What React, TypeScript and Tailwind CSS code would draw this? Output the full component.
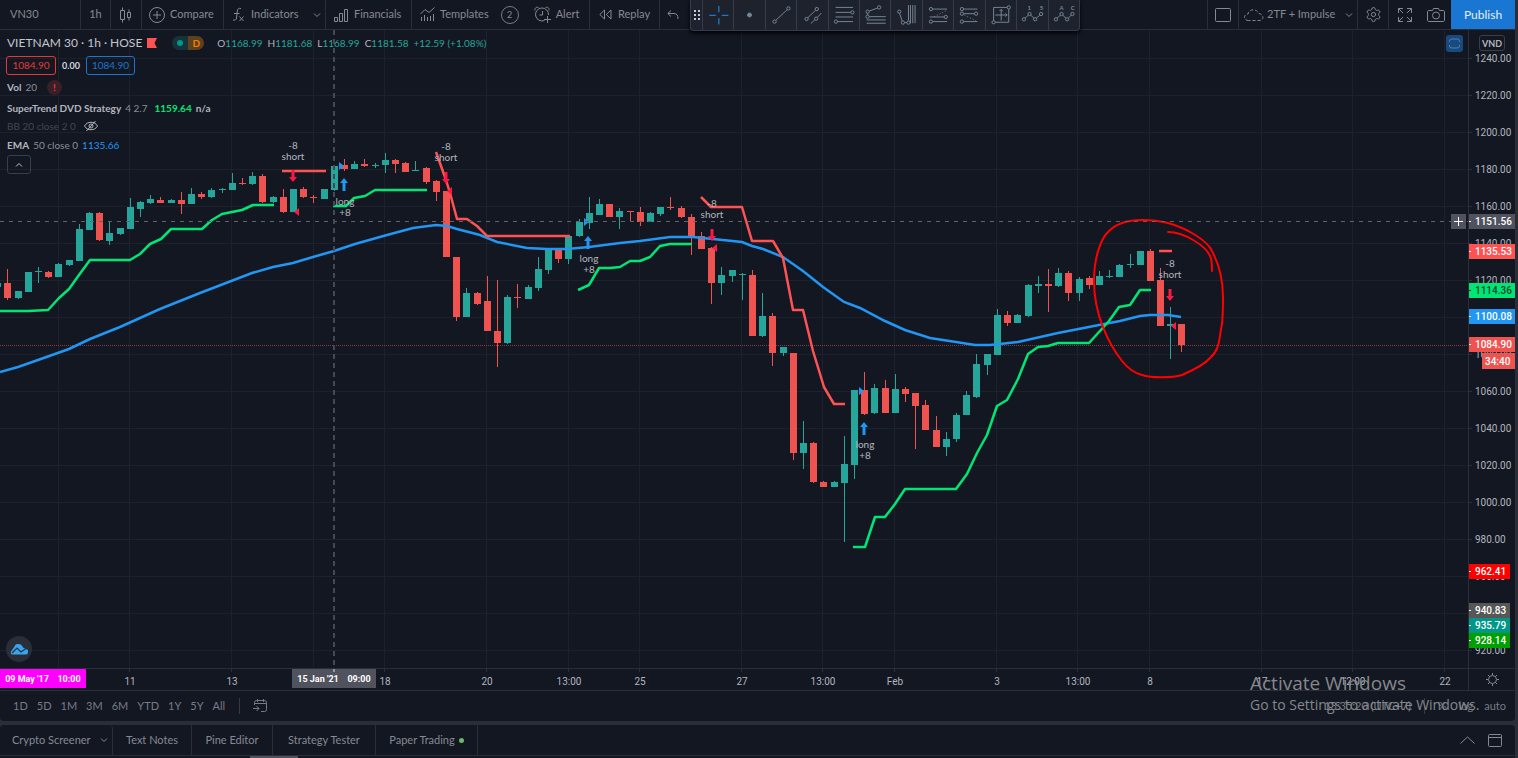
import type { ReactNode } from "react";
import { Settings } from "lucide-react";

const BAR_STEP = 10.202;
const FIRST_BAR = 7.3;
const PLOT_TOP = 30;

const UP = "#26a69a";
const DOWN = "#ef5350";

// [direction, body top, body bottom, high, low], starting one bar off screen
const candles: [string, number, number, number, number][] = [
  ["u", 283, 287, 283, 287],
  ["d", 283, 298, 269, 300],
  ["u", 291, 298, 291, 299],
  ["u", 272, 292, 272, 292],
  ["u", 271, 272, 267, 283],
  ["d", 272, 277, 271, 278],
  ["u", 264, 277, 263, 277],
  ["u", 260, 265, 260, 266],
  ["u", 229, 261, 224, 261],
  ["u", 213, 230, 212, 230],
  ["d", 213, 240, 212, 241],
  ["u", 233, 241, 221, 245],
  ["u", 228, 234, 228, 235],
  ["u", 207, 229, 198, 229],
  ["u", 202, 209, 201, 217],
  ["u", 199, 203, 195, 204],
  ["d", 200, 203, 197, 203],
  ["u", 200, 203, 199, 203],
  ["d", 200, 204, 192, 214],
  ["u", 194, 204, 188, 204],
  ["d", 194, 197, 192, 199],
  ["u", 190, 197, 188, 198],
  ["u", 189, 190, 188, 193],
  ["u", 183, 190, 173, 190],
  ["d", 183, 184, 178, 185],
  ["u", 176, 184, 172, 185],
  ["d", 176, 202, 174, 203],
  ["u", 197, 202, 196, 203],
  ["d", 197, 212, 189, 213],
  ["u", 189, 212, 189, 212],
  ["d", 189, 197, 187, 198],
  ["d", 197, 198, 195, 203],
  ["u", 189, 199, 189, 199],
  ["u", 166, 190, 166, 191],
  ["d", 165, 169, 159, 171],
  ["u", 164, 169, 161, 169],
  ["d", 164, 166, 159, 167],
  ["u", 165, 166, 163, 168],
  ["u", 160, 165, 153, 173],
  ["d", 160, 164, 159, 173],
  ["d", 163, 172, 162, 172],
  ["u", 170, 171, 161, 171],
  ["d", 168, 182, 167, 184],
  ["d", 181, 192, 180, 201],
  ["d", 191, 257, 191, 257],
  ["d", 257, 317, 257, 321],
  ["u", 293, 317, 288, 317],
  ["d", 293, 304, 292, 305],
  ["d", 301, 331, 276, 331],
  ["d", 331, 343, 280, 367],
  ["u", 297, 343, 295, 344],
  ["d", 297, 298, 284, 308],
  ["u", 287, 299, 285, 299],
  ["u", 269, 288, 257, 291],
  ["u", 250, 270, 249, 274],
  ["d", 250, 259, 249, 263],
  ["u", 236, 259, 235, 264],
  ["u", 222, 236, 219, 237],
  ["u", 213, 223, 197, 229],
  ["u", 204, 215, 199, 215],
  ["d", 204, 217, 204, 217],
  ["u", 211, 217, 208, 229],
  ["d", 211, 212, 211, 222],
  ["d", 212, 222, 207, 226],
  ["u", 213, 222, 212, 222],
  ["u", 207, 214, 207, 216],
  ["d", 207, 208, 197, 210],
  ["d", 208, 217, 206, 218],
  ["d", 217, 236, 214, 255],
  ["d", 236, 249, 232, 249],
  ["d", 248, 283, 247, 304],
  ["u", 275, 283, 267, 295],
  ["u", 270, 276, 270, 282],
  ["u", 274, 275, 273, 300],
  ["d", 275, 336, 270, 336],
  ["u", 316, 336, 293, 337],
  ["d", 316, 353, 313, 366],
  ["u", 347, 353, 347, 356],
  ["d", 353, 453, 353, 460],
  ["u", 443, 453, 421, 469],
  ["d", 443, 482, 442, 483],
  ["d", 482, 487, 481, 487],
  ["u", 482, 487, 481, 487],
  ["u", 464, 483, 436, 542],
  ["u", 390, 465, 390, 479],
  ["d", 390, 414, 372, 415],
  ["u", 388, 413, 384, 414],
  ["d", 388, 413, 380, 413],
  ["u", 389, 413, 374, 413],
  ["d", 389, 394, 387, 402],
  ["d", 393, 406, 393, 449],
  ["d", 405, 430, 400, 430],
  ["d", 430, 447, 416, 447],
  ["u", 439, 447, 432, 456],
  ["u", 415, 439, 413, 442],
  ["u", 395, 415, 391, 415],
  ["u", 364, 397, 354, 398],
  ["u", 354, 365, 354, 375],
  ["u", 315, 355, 309, 355],
  ["d", 315, 323, 311, 326],
  ["u", 315, 323, 314, 323],
  ["u", 285, 316, 284, 317],
  ["u", 284, 286, 276, 293],
  ["d", 284, 286, 269, 312],
  ["u", 273, 286, 268, 287],
  ["d", 273, 293, 271, 301],
  ["u", 279, 293, 277, 301],
  ["d", 278, 285, 276, 289],
  ["u", 276, 285, 271, 285],
  ["u", 276, 277, 270, 278],
  ["u", 265, 277, 264, 277],
  ["u", 264, 265, 254, 268],
  ["u", 251, 265, 251, 265],
  ["d", 251, 281, 249, 281],
  ["d", 280, 326, 268, 326],
  ["u", 324, 326, 307, 359],
  ["d", 324, 345, 324, 352],
];

const upTrend = [
  "0,311 28,311 48,310 59,298 69,289 79,275 90,260 130,260 140,254 150,244 161,239 171,229 202,229 212,220 222,214 232,212 242,210 253,205 274,205",
  "333,206 346,206 354,198 365,196 375,190 427,190",
  "578,290 589,285 599,268 610,268 620,267 630,261 640,261 650,257 660,246 670,244 692,244",
  "853,547 865,547 875,517 885,517 895,504 905,489 956,489 967,474 977,453 987,435 997,406 1007,400 1018,379 1028,354 1038,347 1048,346 1058,343 1089,343 1099,332 1109,321 1119,307 1130,305 1140,290 1151,290",
];

const downTrend = [
  "282,171 326,171",
  "436,152 446,180 450,193 457,219 467,219 477,226 487,236 570,236",
  "701,197 711,207 742,207 752,241 773,241 783,258 793,310 803,310 813,351 824,387 834,404 845,404",
  "1159,251 1172,251",
];

const ema =
  "0,372 18,367 38,360 69,349 90,339 120,327 160,309 200,293 252,273 273,267 293,263 313,257 334,251 355,244 387,235 413,228 436,225 447,226 457,229 480,235 497,242 527,248 547,249 567,249 589,247 620,243 640,241 670,237 693,237 713,239 742,242 752,246 763,249 783,257 803,271 823,287 844,302 860,308 885,321 905,330 930,338 956,342 975,345 990,345 1018,342 1058,333 1099,325 1120,321 1140,316 1150,315 1168,315 1181,317";

const signals = [
  { side: "short", x: 293, label: 149, arrow: 169, tip: [299, 212] },
  { side: "short", x: 446, label: 150, arrow: 171, tip: [452, 191] },
  { side: "short", x: 712, label: 207, arrow: 228, tip: [717, 248] },
  { side: "short", x: 1170, label: 267, arrow: 288, tip: [1176, 326] },
  { side: "long", x: 345, label: 205, arrow: 190, tip: [339, 166] },
  { side: "long", x: 589, label: 262, arrow: 248, tip: [584, 222] },
  { side: "long", x: 865, label: 448, arrow: 434, tip: [859, 391] },
];

const timeLabels: [number, string][] = [
  [59, ""],
  [130, "11"],
  [232, "13"],
  [314, ""],
  [385, "18"],
  [487, "20"],
  [569, "13:00"],
  [640, "25"],
  [742, "27"],
  [823, "13:00"],
  [895, "Feb"],
  [997, "3"],
  [1078, "13:00"],
  [1150, "8"],
  [1262, "17"],
  [1353, "12:00"],
  [1445, "22"],
];

const prices = Array.from({ length: 17 }, (_, i) => ({
  y: Math.round(58 + i * 36.97),
  text: (1240 - i * 20).toFixed(2),
}));

const priceTags = [
  { y: 222, text: "1151.56", bg: "#50535e", color: "#ffffff", w: 47 },
  { y: 252, text: "1135.53", bg: "#ff5252", color: "#ffffff", w: 47 },
  { y: 291, text: "1114.36", bg: "#00e676", color: "#0b4429", w: 47 },
  { y: 317, text: "1100.08", bg: "#2196f3", color: "#ffffff", w: 47 },
  { y: 345, text: "1084.90", bg: "#ef5350", color: "#ffffff", w: 47 },
  { y: 572, text: "962.41", bg: "#ff0000", color: "#ffffff", w: 42 },
  { y: 611, text: "940.83", bg: "#575757", color: "#ffffff", w: 42 },
  { y: 626, text: "935.79", bg: "#009688", color: "#ffffff", w: 42 },
  { y: 641, text: "928.14", bg: "#00a000", color: "#ffffff", w: 42 },
];

const ranges = ["1D", "5D", "1M", "3M", "6M", "YTD", "1Y", "5Y", "All"];

function Icon({
  w = 20,
  h = 20,
  children,
}: {
  w?: number;
  h?: number;
  children: ReactNode;
}) {
  return (
    <svg
      width={w}
      height={h}
      viewBox={`0 0 ${w} ${h}`}
      fill="none"
      stroke="currentColor"
      className="shrink-0"
      aria-hidden="true"
    >
      {children}
    </svg>
  );
}

function Chevron() {
  return (
    <Icon w={8} h={6}>
      <path d="M1 1.5 4 4.5 7 1.5" />
    </Icon>
  );
}

function Dots({ points }: { points: [number, number][] }) {
  return (
    <>
      {points.map(([x, y]) => (
        <circle key={`${x}-${y}`} cx={x} cy={y} r="5" />
      ))}
    </>
  );
}

const drawingTools: { name: string; art: ReactNode }[] = [
  {
    name: "Cross",
    art: <path stroke="#1e77c6" strokeWidth="4" d="M19 46h20M57 46h20M48 18v19M48 55v19" />,
  },
  { name: "Dot", art: <circle cx="47" cy="45" r="6" fill="currentColor" /> },
  {
    name: "Trend line",
    art: (
      <>
        <path d="M30 61 64 29" />
        <Dots points={[[26, 65], [68, 25]]} />
      </>
    ),
  },
  {
    name: "Parallel channel",
    art: (
      <>
        <path d="M33 53 56 31M42 71 54 60M62 52 74 39" />
        <Dots points={[[29, 57], [60, 27], [58, 56]]} />
      </>
    ),
  },
  {
    name: "Fib retracement",
    art: (
      <>
        <path d="M20 22h53M20 37h46M20 51h53M26 65h47" />
        <Dots points={[[71, 37], [21, 65]]} />
      </>
    ),
  },
  {
    name: "Fib extension",
    art: (
      <>
        <path d="M28 33 53 24M23 40v5M28 50h50M20 60h58M20 70h58" />
        <Dots points={[[23, 35], [58, 22], [23, 50]]} />
      </>
    ),
  },
  {
    name: "Fib time zone",
    art: (
      <>
        <path d="M26 40 34 63M41 68h7M53 15v47M59 15v55M66 15v55M73 15v55" />
        <Dots points={[[25, 35], [36, 68], [53, 68]]} />
      </>
    ),
  },
  {
    name: "Long position",
    art: (
      <>
        <path d="M29 27h44M20 51h44M29 65h44" />
        <path d="M34 50 70 32" strokeDasharray="3 6" />
        <Dots points={[[24, 27], [69, 51], [24, 65]]} />
      </>
    ),
  },
  {
    name: "Short position",
    art: (
      <>
        <path d="M29 27h42M29 41h33M29 65h42" />
        <path d="M32 46 66 62" strokeDasharray="3 6" />
        <Dots points={[[24, 27], [24, 41], [67, 41], [24, 65]]} />
      </>
    ),
  },
  {
    name: "Date and price range",
    art: (
      <>
        <path d="M64 22H23v40M28 67h41V27M28 45h36M46 28v34M41 33l5-5 5 5M59 40l5 5-5 5" />
        <Dots points={[[69, 22], [23, 67]]} />
      </>
    ),
  },
  {
    name: "Elliott impulse wave",
    art: (
      <>
        <path d="M25 54l9-8M42 46l9 8M59 54l10-8" />
        <Dots points={[[21, 58], [38, 42], [55, 58], [73, 42]]} />
        <g className="fill-current stroke-none text-[18px] font-bold" textAnchor="middle">
          <text x="37" y="29">1</text>
          <text x="74" y="29">5</text>
        </g>
      </>
    ),
  },
  {
    name: "Elliott correction wave",
    art: (
      <>
        <path d="M25 54l9-8M42 46l9 8M59 54l8-8" />
        <Dots points={[[21, 58], [38, 42], [55, 58], [71, 42]]} />
        <g className="fill-current stroke-none text-[18px] font-bold" textAnchor="middle">
          <text x="38" y="29">A</text>
          <text x="72" y="29">C</text>
        </g>
      </>
    ),
  },
];

function DrawingToolbar() {
  return (
    <div
      role="toolbar"
      aria-label="Drawing tools"
      className="absolute left-[690px] top-0 z-10 flex h-[31px] w-[390px] rounded-b border border-t-0 border-[#363a4e] bg-[#1e222d] text-[#758696] shadow-[0_2px_4px_#000]"
    >
      <div className="flex w-[11px] shrink-0 items-center justify-center text-[#c8cbd4]">
        <Icon w={6} h={12}>
          <path d="M0 2h2M4 2h2M0 6h2M4 6h2M0 10h2M4 10h2" strokeWidth="2" />
        </Icon>
      </div>
      <div className="grid flex-1 grid-cols-12">
        {drawingTools.map((tool) => (
          <button
            key={tool.name}
            aria-label={tool.name}
            className="overflow-hidden border-l border-[#363a4e]"
          >
            <svg
              viewBox="0 0 94 90"
              fill="none"
              stroke="currentColor"
              strokeWidth="3"
              className="h-[30px] w-[31px]"
            >
              {tool.art}
            </svg>
          </button>
        ))}
      </div>
    </div>
  );
}

function Header() {
  return (
    <header className="relative flex h-[30px] shrink-0 border-b border-[#2a2e39] text-[11px] text-[#868993]">
      <input
        aria-label="Symbol"
        defaultValue="VN30"
        className="w-[81px] border-r border-[#2a2e39] bg-transparent pl-[10px] outline-none"
      />
      <button className="w-[30px] border-r border-[#2a2e39]">1h</button>
      <button
        aria-label="Candles"
        className="flex w-[31px] items-center justify-center border-r border-[#2a2e39]"
      >
        <Icon w={12} h={16}>
          <path d="M.5 3.5h4v9h-4zM2.500 .5v3M2.500 12.500v3M7.500 5.500h3v5h-3zM9 2.500v3M9 10.500v3" />
        </Icon>
      </button>
      <button className="flex w-[82px] items-center gap-[5px] border-r border-[#2a2e39] pl-[7px]">
        <Icon w={16} h={16}>
          <circle cx="8" cy="8" r="7.500" />
          <path d="M8 4v8M4 8h8" />
        </Icon>
        Compare
      </button>
      <button className="flex w-[102px] items-center border-r border-[#2a2e39] pl-2">
        <Icon w={14} h={16}>
          <path d="M9 1.500C6.500.8 5.500 2 5.300 4L4.500 11c-.2 2-1.500 2.500-3.500 2M2 6.500h5.500M7.500 9.500l4 4.500M11.500 9.500l-4 4.500" />
        </Icon>
        <span className="ml-[5px] flex-1 text-left">Indicators</span>
        <span className="mr-1">
          <Chevron />
        </span>
      </button>
      <button className="flex w-[86px] items-center gap-[6px] border-r border-[#2a2e39] pl-2">
        <Icon w={14} h={14}>
          <path d="M.5 9.500h3v4h-3zM5.500 5.500h3v8h-3zM10.500 1.500h3v12h-3z" />
        </Icon>
        Financials
      </button>
      <div className="flex w-[178px] items-center border-r border-[#2a2e39] pl-2">
        <button className="flex items-center gap-[5px]">
          <Icon w={15} h={15}>
            <path d="M.5 7 5 2.500 9 5.500 14.500 .5M1.500 10v4M4.500 8v6M7.500 10v4M10.500 9v5M13.500 7v7" />
          </Icon>
          Templates
        </button>
        <button className="ml-3 flex h-[18px] w-[18px] items-center justify-center rounded-full border border-[#787b86] text-[9px]">
          2
        </button>
        <button className="ml-[15px] flex items-center gap-[5px]">
          <Icon w={17} h={17}>
            <path d="M10.500 14.500A6.500 6.500 0 1 1 14.500 9M8.500 5v4H5.500M1 4.500C.5 2 2.500.5 4.500 1.500M15 4.500C15.500 2 13.500.5 11.500 1.500M13.500 10v7M10 13.500h7" />
          </Icon>
          Alert
        </button>
      </div>
      <button className="flex w-[70px] items-center gap-[6px] border-r border-[#2a2e39] pl-[9px]">
        <Icon w={13} h={11}>
          <path d="M5.500 1v9L.8 5.500zM12 1v9L7.300 5.500z" />
        </Icon>
        Replay
      </button>
      <button aria-label="Undo" className="flex w-[26px] items-center justify-center">
        <Icon w={12} h={10}>
          <path d="M4 .5.8 3.500 4 6.500M1 3.500h6c3 0 4 2 4 5.500" />
        </Icon>
      </button>
      <DrawingToolbar />
      <div className="ml-auto flex">
        <button
          aria-label="Layout"
          className="flex w-[31px] items-center justify-center border-l border-[#2a2e39]"
        >
          <Icon w={16} h={14}>
            <rect x=".5" y=".5" width="15" height="13" rx="1" />
          </Icon>
        </button>
        <button className="flex w-[119px] items-center border-l border-[#2a2e39] pl-[5px]">
          <Icon w={20} h={14}>
            <path
              d="M4.500 12.500C-1 12.500-.5 6 4 6 5 .5 13 .5 14.500 5.500 20 6 20.500 12.500 15 12.500z"
              strokeDasharray="3 2"
            />
          </Icon>
          <span className="ml-[3px] flex-1 text-left">2TF + Impulse</span>
          <span className="mr-1">
            <Chevron />
          </span>
        </button>
        <button
          aria-label="Settings"
          className="flex w-[32px] items-center justify-center border-x border-[#2a2e39]"
        >
          <Settings size={17} strokeWidth={1.4} />
        </button>
        <button aria-label="Fullscreen" className="flex w-[31px] items-center justify-center">
          <Icon w={14} h={14}>
            <path d="M.5 5V.5H5M.5.5 5 5M9 .5h4.500V5M13.500.5 9 5M.5 9v4.500H5M.5 13.500 5 9M13.500 9v4.500H9M13.500 13.500 9 9" />
          </Icon>
        </button>
        <button aria-label="Snapshot" className="flex w-[31px] items-center justify-center">
          <Icon w={18} h={14}>
            <path d="M2 2.500h3.500l1-2h5l1 2H16c1 0 1.500.5 1.500 1.500v8c0 1-.5 1.500-1.500 1.500H2C1 13.500.5 13 .5 12V4C.5 3 1 2.500 2 2.500z" />
            <circle cx="9" cy="7.500" r="3.500" />
          </Icon>
        </button>
        <button className="w-16 bg-[#1976d2] text-[12px] text-[#e6eef8]">Publish</button>
      </div>
    </header>
  );
}

function Legend() {
  return (
    <div className="absolute left-[6px] top-0 flex flex-col text-[10px] text-[#8b8e98]">
      <div className="flex h-[26px] items-center whitespace-nowrap pl-px">
        <h1 className="text-[12px] text-[#c3c6ce]">VIETNAM 30 · 1h · HOSE</h1>
        <span className="ml-[5px]">
          <Icon w={11} h={10}>
            <path d="M0 0h10L7.500 5 10 10H0z" fill="#ff5252" stroke="none" />
          </Icon>
        </span>
        <span className="ml-[14px] flex h-[14px] w-8 overflow-hidden rounded-full text-[10px] font-bold">
          <span className="flex flex-1 items-center justify-center bg-[#16333a]">
            <span className="h-[6px] w-[6px] rounded-full bg-[#009688]" />
          </span>
          <span className="flex flex-1 items-center justify-center bg-[#5c411c] text-[#f57c00]">
            D
          </span>
        </span>
        <span className="ml-[13px] flex gap-[5px] text-[#26a69a]">
          {[
            ["O", "1168.99"],
            ["H", "1181.68"],
            ["L", "1168.99"],
            ["C", "1181.58"],
          ].map(([name, value]) => (
            <span key={name}>
              <span className="text-[#b2b5be]">{name}</span>
              {value}
            </span>
          ))}
          <span>+12.59 (+1.08%)</span>
        </span>
      </div>
      <div className="flex h-[19px] items-center">
        <button className="h-[19px] w-[50px] rounded-[3px] border border-[#e53935] text-[#e53935]">
          1084.90
        </button>
        <span className="w-[30px] text-center text-[9px] font-bold text-[#d1d4dc]">0.00</span>
        <button className="h-[19px] w-[49px] rounded-[3px] border border-[#1976d2] text-[#1976d2]">
          1084.90
        </button>
      </div>
      <div className="flex h-6 items-center gap-1 pl-px">
        <b className="font-bold text-[#b2b5be]">Vol</b>
        <span>20</span>
        <span className="ml-[6px] flex h-[15px] w-[15px] items-center justify-center rounded-full bg-[#3b1f28] font-bold text-[#e53935]">
          !
        </span>
      </div>
      <div className="flex h-[18px] items-center gap-1 whitespace-nowrap pl-px">
        <b className="font-bold text-[#b2b5be]">SuperTrend DVD Strategy</b>
        <span>4 2.7</span>
        <span className="ml-[3px] font-bold text-[#00e676]">1159.64</span>
        <span className="font-bold text-[#b2b5be]">n/a</span>
      </div>
      <div className="flex h-[18px] items-center gap-2 pl-px text-[#434651]">
        BB 20 close 2 0
        <span className="text-[#b2b5be]">
          <Icon w={14} h={12}>
            <path d="M.5 6C3 1 11 1 13.500 6 11 11 3 11 .5 6zM2.500 11 11.500 1" />
            <circle cx="7" cy="6" r="2" />
          </Icon>
        </span>
      </div>
      <div className="flex h-5 items-center gap-1 pl-px">
        <b className="font-bold text-[#b2b5be]">EMA</b>
        <span>50 close 0</span>
        <span className="text-[#2196f3]">1135.66</span>
      </div>
      <button
        aria-label="Collapse legend"
        className="ml-px flex h-[19px] w-6 items-center justify-center rounded-[3px] border border-[#3a3e49] text-[#c3c6ce]"
      >
        <Icon w={8} h={6}>
          <path d="M1 4.500 4 1.500 7 4.500" />
        </Icon>
      </button>
    </div>
  );
}

function Signal({ side, x, label, arrow, tip }: (typeof signals)[number]) {
  const [tx, ty] = tip;
  const isLong = side === "long";
  return (
    <g>
      {isLong ? (
        <g fill="#2196f3">
          <path d={`M${x - 1} ${arrow - 12}l4 5h-2.5v8h-3v-8h-2.5z`} />
          <path d={`M${tx} ${ty - 4}l5 4-5 4z`} />
        </g>
      ) : (
        <g fill="#ff1744">
          <path d={`M${x} ${arrow + 13}l4-5h-2.5v-7h-3v7h-2.5z`} />
          <path d={`M${tx} ${ty - 4}l-5 4 5 4z`} />
        </g>
      )}
      <g className="fill-[#b2b5be] text-[10px]" textAnchor="middle">
        <text x={x} y={label}>
          {isLong ? "long" : "-8"}
        </text>
        <text x={x} y={label + 11}>
          {isLong ? "+8" : "short"}
        </text>
      </g>
    </g>
  );
}

function Chart() {
  return (
    <section aria-label="Price chart" className="relative min-w-0 flex-1 overflow-hidden">
      <svg className="absolute inset-0 h-full w-full" fill="none">
        <g transform={`translate(0 ${-PLOT_TOP})`}>
          <g stroke="#1d212c" shapeRendering="crispEdges">
            {prices.map((p) => (
              <line key={p.text} x1="0" x2="100%" y1={p.y + 0.5} y2={p.y + 0.5} />
            ))}
            {timeLabels.map(([x]) => (
              <line key={x} x1={x - 0.5} x2={x - 0.5} y1="30" y2="2000" />
            ))}
          </g>
          <line x1="0" x2="100%" y1="345.5" y2="345.5" stroke="#8a3a3e" strokeDasharray="1 1" />
          {candles.map(([dir, top, bottom, high, low], i) => {
            const x = Math.round(FIRST_BAR + (i - 1) * BAR_STEP);
            return (
              <g key={i} fill={dir === "u" ? UP : DOWN}>
                <rect x={x} y={high} width="1" height={low - high} />
                <rect x={x - 3} y={top} width="7" height={bottom - top} />
              </g>
            );
          })}
          <polyline points={ema} stroke="#2196f3" strokeWidth="2.500" />
          <g stroke="#00e676" strokeWidth="2.500" strokeLinejoin="round">
            {upTrend.map((points) => (
              <polyline key={points} points={points} />
            ))}
          </g>
          <g stroke="#ff5252" strokeWidth="2.500" strokeLinejoin="round">
            {downTrend.map((points) => (
              <polyline key={points} points={points} />
            ))}
          </g>
          {signals.map((s) => (
            <Signal key={s.x} {...s} />
          ))}
          <g stroke="#ff0000" strokeWidth="2" strokeLinecap="round">
            <path d="M1142 220C1154 220 1160 221 1168 223C1186 228 1207 240 1212 251C1220 266 1223 279 1223 297C1223 311 1223 322 1221 329C1219 342 1219 350 1210 358C1203 366 1191 371 1182 375C1172 378 1151 378 1142 375C1134 373 1126 366 1122 361C1108 343 1094 314 1094 281C1094 257 1101 238 1109 231C1117 223 1129 220 1142 220" />
            <path d="M1168 232C1184 232 1206 246 1210 256C1212 259 1212 263 1212 271" />
          </g>
          <line x1="0" x2="100%" y1="221.500" y2="221.500" stroke="#5f636e" strokeDasharray="4 5" />
          <line x1="334" x2="334" y1="30" y2="2000" stroke="#454955" strokeWidth="2" strokeDasharray="5 4" />
        </g>
      </svg>
      <Legend />
      <button
        aria-label="Reset scale"
        className="absolute right-[5px] top-[5px] flex h-[17px] w-[17px] items-center justify-center rounded-[3px] bg-[#164a80] text-[#5d7f9f]"
      >
        <Icon w={11} h={11}>
          <path d="M.5 4V3Q.5 1 3 1h5q2.500 0 2.500 2v1M.5 7v1q0 2 2.500 2h5q2.500 0 2.500-2V7" />
        </Icon>
      </button>
      <button
        aria-label="Add at price"
        className="absolute right-[2px] top-[184px] flex h-[15px] w-[15px] items-center justify-center bg-[#50535e] text-white"
      >
        <Icon w={9} h={9}>
          <path d="M4.500 0v9M0 4.500h9" />
        </Icon>
      </button>
      <button
        aria-label="Go to TradingView"
        className="absolute bottom-[6px] left-[6px] flex h-[26px] w-[26px] items-center justify-center rounded-full bg-[#2a2e39]"
      >
        <svg width="18" height="12" viewBox="0 0 18 12" aria-hidden="true">
          <path
            d="M3 11.500h12a2.800 2.800 0 0 0 1-5.500l-3-1.500C12 1.500 9.500.5 7.500 1 6 1.300 5 2.200 4.500 3.500L1 8.500a2 2 0 0 0 2 3z"
            fill="#37a6ef"
          />
          <path d="M2 10 7 5l4 4 5-3.500" fill="none" stroke="#2a2e39" strokeWidth="1.200" />
        </svg>
      </button>
    </section>
  );
}

function PriceAxis() {
  return (
    <aside
      aria-label="Price scale"
      className="relative w-[47px] shrink-0 overflow-hidden border-l border-[#2a2e39]"
    >
      <svg className="absolute inset-0 h-full w-full font-['Roboto',sans-serif] text-[10px]">
        <g transform={`translate(-1 ${-PLOT_TOP})`}>
          {prices.map((p) => (
            <g key={p.text}>
              <rect x="1" y={p.y} width="3" height="1" fill="#2a2e39" />
              <text x="7" y={p.y + 4} fill="#b2b5be">
                {p.text}
              </text>
            </g>
          ))}
          {priceTags.map((t) => (
            <g key={t.text}>
              <rect x="0" y={t.y - 8} width={t.w} height="15" fill={t.bg} />
              <rect x="0" y={t.y - 1} width="3" height="1" fill={t.color} />
              <text x="7" y={t.y + 3} fill={t.color} className="font-medium">
                {t.text}
              </text>
            </g>
          ))}
          <rect x="14" y="353" width="33" height="16" fill="#ef5350" />
          <text x="17" y="365" fill="#ffffff" className="font-medium">
            34:40
          </text>
        </g>
      </svg>
      <button className="absolute left-[10px] top-[5px] h-4 w-[26px] rounded-[3px] border border-[#3a3e49] bg-[#131722] text-[9px] font-bold leading-none text-[#b2b5be]">
        VND
      </button>
    </aside>
  );
}

function TimeAxis() {
  return (
    <div className="flex h-[22px] shrink-0 border-t border-[#2a2e39]">
      <div className="relative min-w-0 flex-1 overflow-hidden">
        <svg
          className="absolute inset-0 h-full w-full font-['Roboto',sans-serif] text-[10px]"
          textAnchor="middle"
        >
          {timeLabels.map(([x, text]) => (
            <g key={x}>
              <rect x={x - 1} y="0" width="1" height="3" fill="#2a2e39" />
              <text x={x} y="16" fill="#b2b5be">
                {text}
              </text>
            </g>
          ))}
          <rect x="0" y="0" width="86" height="19" fill="#ff00ff" />
          <rect x="292" y="0" width="84" height="19" fill="#50535e" />
          <rect x="333" y="0" width="2" height="3" fill="#9598a1" />
          <g fill="#ffffff" className="text-[9px] font-bold">
            <text x="27" y="13">09 May '17</text>
            <text x="69" y="13">10:00</text>
            <text x="318" y="13">15 Jan '21</text>
            <text x="359" y="13">09:00</text>
          </g>
        </svg>
      </div>
      <button
        aria-label="Scale settings"
        className="flex w-[47px] items-center justify-center border-l border-[#2a2e39] text-[#868993]"
      >
        <Icon w={13} h={13}>
          <circle cx="6.500" cy="6.500" r="4" />
          <path d="M6.500 0v2M6.500 11v2M0 6.500h2M11 6.500h2M2 2l1.500 1.500M9.500 9.500 11 11M11 2 9.500 3.500M3.500 9.500 2 11" />
        </Icon>
      </button>
    </div>
  );
}

function RangeBar() {
  return (
    <div className="flex h-[31px] shrink-0 items-center rounded-b border-t border-[#2a2e39] bg-[#131722] pl-[13px] text-[11px] text-[#787b86]">
      <div className="flex gap-[9px]">
        {ranges.map((r) => (
          <button key={r}>{r}</button>
        ))}
      </div>
      <span className="ml-[14px] mr-[13px] h-4 w-px bg-[#363a45]" />
      <button aria-label="Go to date">
        <Icon w={14} h={14}>
          <path d="M1.500 6V3.500q0-2 2-2h8q2 0 2 2v7q0 2-2 2H8M1.500 4.500h12M4.500 0v3M10.500 0v3M0 9.500h6M3.500 7 6 9.500 3.500 12" />
        </Icon>
      </button>
      <div className="ml-auto flex items-center pr-[9px]">
        <button>13:35:20 (UTC+7)</button>
        <span className="mx-[13px] h-4 w-px bg-[#363a45]" />
        <button className="mr-[12px]">%</button>
        <button className="mr-[11px]">log</button>
        <button>auto</button>
      </div>
    </div>
  );
}

function BottomTabs() {
  return (
    <nav className="flex h-[31px] shrink-0 rounded-t border-b border-[#2a2e39] bg-[#131722] text-[11px] text-[#868993]">
      <button className="flex w-[113px] items-center justify-between rounded-t border-r border-[#2a2e39] pl-3 pr-1">
        Crypto Screener
        <Chevron />
      </button>
      <button className="w-[79px] border-r border-[#2a2e39]">Text Notes</button>
      <button className="w-[81px] border-r border-[#2a2e39]">Pine Editor</button>
      <button className="w-[103px] border-r border-[#2a2e39]">Strategy Tester</button>
      <button className="flex w-[102px] items-center justify-center gap-1 border-r border-[#2a2e39]">
        Paper Trading
        <span className="h-[5px] w-[5px] rounded-full bg-[#66bb6a]" />
      </button>
      <div className="ml-auto flex items-center gap-[13px] pr-[13px]">
        <button aria-label="Open panel">
          <Icon w={15} h={8}>
            <path d="M.5 7.500 7.500 1l7 6.500" />
          </Icon>
        </button>
        <button aria-label="Maximize panel">
          <Icon w={14} h={13}>
            <path d="M.5 1.500q0-1 1-1h11q1 0 1 1v10q0 1-1 1h-11q-1 0-1-1zM.5 3.500h13" />
          </Icon>
        </button>
      </div>
    </nav>
  );
}

export default function App() {
  return (
    <div className="relative flex h-screen flex-col overflow-hidden border-r-[3px] border-[#2a2e39] bg-[#131722] font-['Lato',sans-serif]">
      <Header />
      <main className="flex min-h-0 flex-1">
        <Chart />
        <PriceAxis />
      </main>
      <TimeAxis />
      <div className="flex shrink-0 flex-col gap-1 bg-[#2a2e39]">
        <RangeBar />
        <BottomTabs />
      </div>
      <div className="h-[2px] shrink-0 bg-[#131722] pl-[250px]">
        <div className="h-[2px] w-12 bg-[#50535e]" />
      </div>
      <div className="pointer-events-none absolute bottom-[43px] right-[29px] w-[236px] whitespace-nowrap font-['Open_Sans',sans-serif] text-[#85878b]">
        <p className="text-[19px] leading-6">Activate Windows</p>
        <p className="text-[14px] leading-5">Go to Settings to activate Windows.</p>
      </div>
    </div>
  );
}
